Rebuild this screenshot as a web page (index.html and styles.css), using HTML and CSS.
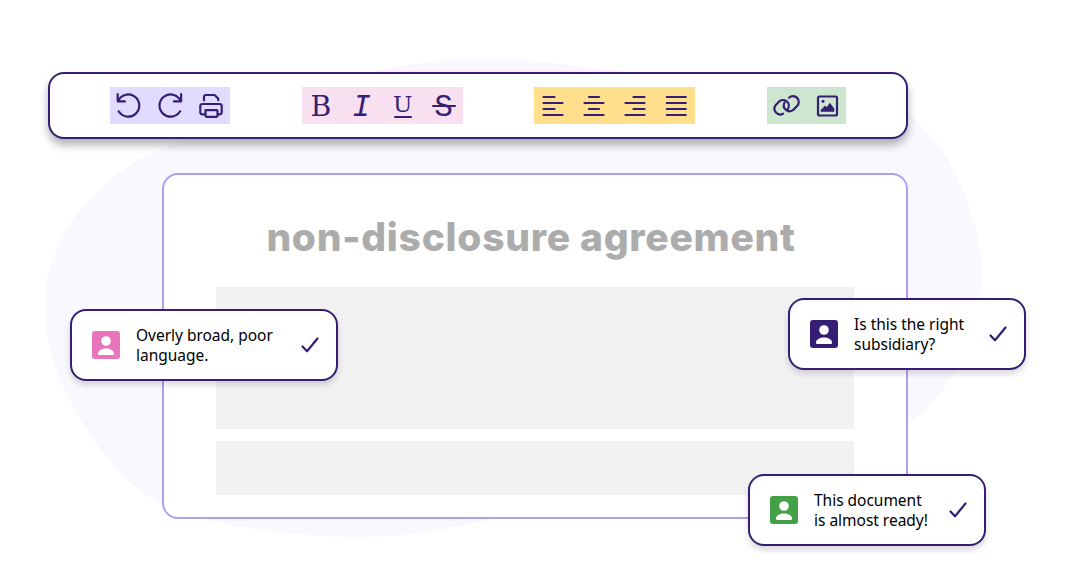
FILE: index.html
```
<!DOCTYPE html>
<html lang="en">
<head>
    <meta charset="UTF-8">
    <meta name="viewport" content="width=device-width, initial-scale=1.0">
    <title>Document Editor</title>
    <link rel="stylesheet" href="styles.css">
</head>
<body>
    <svg class="blob" viewBox="0 0 1070 580">
        <path d="M475 59C535 58 585 68 628 72C740 91 830 70 908 112Q929 132 947 158Q961 181 970 210Q982 243 982 277C982 335 955 388 908 425C820 488 700 476 560 503C490 518 430 537 365 537C290 537 220 528 162 504Q139 493 120 473Q90 440 70 400Q45 355 45 310C45 284 48 271 53 260C65 225 80 209 100 189C120 169 145 155 170 145C270 105 370 59 475 59Z"/>
    </svg>

    <div class="editor">
        <div class="toolbar">
            <div class="tool-group history">
                <svg class="icon" viewBox="0 0 28 28"><path d="M2.7 2v7.4h7.2M2.9 9.4A11.1 11.1 0 1 1 3.7 19.3"/></svg>
                <svg class="icon" viewBox="0 0 28 28"><path d="M25.1 2v7.4h-7.2M24.9 9.4A11.1 11.1 0 1 0 24.1 19.3"/></svg>
                <svg class="icon" viewBox="0 0 28 28"><path d="M7 8.3V5a2 2 0 0 1 2-2h8.5l3.7 3.5v1.8M7.5 22.3H5.3a2 2 0 0 1-2-2v-6.3a2 2 0 0 1 2-2h17.4a2 2 0 0 1 2 2v6.3a2 2 0 0 1-2 2h-2.2M8.5 18.2h11a1 1 0 0 1 1 1v4.6a1 1 0 0 1-1 1h-10a1 1 0 0 1-1-1z"/></svg>
            </div>
            <div class="tool-group format">
                <span class="letter bold">B</span>
                <span class="letter italic">I</span>
                <span class="letter underline">U</span>
                <span class="letter strike">S</span>
            </div>
            <div class="tool-group align">
                <svg class="icon" viewBox="0 0 28 28"><path d="M4.5 5h11M4.5 11h19M4.5 17h11M4.5 23h19"/></svg>
                <svg class="icon" viewBox="0 0 28 28"><path d="M9 5h10M4.5 11h19M9 17h10M4.5 23h19"/></svg>
                <svg class="icon" viewBox="0 0 28 28"><path d="M12.5 5h11M4.5 11h19M12.5 17h11M4.5 23h19"/></svg>
                <svg class="icon" viewBox="0 0 28 28"><path d="M4.8 5h19M4.8 11h19M4.8 17h19M4.8 23h19"/></svg>
            </div>
            <div class="tool-group insert">
                <svg class="icon" viewBox="0 0 28 28">
                    <path d="M11 21.7A5.8 5.8 0 0 1 3.5 13.3L7.5 9.2A5.8 5.8 0 0 1 15.5 17.5"/>
                    <path d="M17 5.7A5.8 5.8 0 0 1 25.1 14L21 18.1A5.8 5.8 0 0 1 12.6 10.5"/>
                </svg>
                <svg class="icon" viewBox="0 0 28 28">
                    <rect x="5" y="4.5" width="19" height="19" rx="1.5"/>
                    <circle class="solid" cx="10" cy="9.3" r="1.5"/>
                    <path class="solid" d="M7.7 19.8v-1.7l4.5-4.5 1.6 1.6 3-4.5 4.4 5.8v3.3z"/>
                </svg>
            </div>
        </div>

        <div class="document">
            <h1>non-disclosure agreement</h1>
            <div class="block block-large"></div>
            <div class="block block-small"></div>
        </div>
    </div>

    <div class="comment comment-pink">
        <svg class="avatar" viewBox="0 0 28 28"><circle cx="14" cy="10" r="4.8"/><path d="M6 22.5c0-3 4-5 8-5s8 2 8 5c0 1-.5 1.5-1.5 1.5h-13c-1 0-1.5-.5-1.5-1.5z"/></svg>
        <p>Overly broad, poor<br>language.</p>
        <svg class="check" viewBox="0 0 20 20"><path d="M2.5 11.5l4.5 4.8L17.5 3.5"/></svg>
    </div>
    <div class="comment comment-purple">
        <svg class="avatar" viewBox="0 0 28 28"><circle cx="14" cy="10" r="4.8"/><path d="M6 22.5c0-3 4-5 8-5s8 2 8 5c0 1-.5 1.5-1.5 1.5h-13c-1 0-1.5-.5-1.5-1.5z"/></svg>
        <p>Is this the right<br>subsidiary?</p>
        <svg class="check" viewBox="0 0 20 20"><path d="M2.5 11.5l4.5 4.8L17.5 3.5"/></svg>
    </div>
    <div class="comment comment-green">
        <svg class="avatar" viewBox="0 0 28 28"><circle cx="14" cy="10" r="4.8"/><path d="M6 22.5c0-3 4-5 8-5s8 2 8 5c0 1-.5 1.5-1.5 1.5h-13c-1 0-1.5-.5-1.5-1.5z"/></svg>
        <p>This document<br>is almost ready!</p>
        <svg class="check" viewBox="0 0 20 20"><path d="M2.5 11.5l4.5 4.8L17.5 3.5"/></svg>
    </div>
</body>
</html>
```
FILE: styles.css
```
* {
    margin: 0;
    padding: 0;
    box-sizing: border-box;
}

body {
    position: relative;
    width: 1070px;
    height: 580px;
    overflow: hidden;
    background-color: #fff;
    font-family: 'Noto Sans', sans-serif;
}

.blob {
    position: absolute;
    top: 0;
    left: 0;
    width: 1070px;
    height: 580px;
    fill: #f9f8ff;
}

.editor {
    position: relative;
    width: 860px;
    margin-left: 48px;
    padding-top: 72px;
}

/* Toolbar */
.toolbar {
    display: flex;
    justify-content: space-between;
    align-items: center;
    height: 67px;
    padding: 0 60px;
    background-color: #fff;
    border: 2px solid #341f74;
    border-radius: 16px;
    box-shadow: 0 6px 8px rgba(0, 0, 0, 0.3);
}

.tool-group {
    display: flex;
    align-items: center;
    gap: 13px;
    height: 37px;
    padding: 0 5px;
}

.history {
    background-color: #e1dcff;
}

.format {
    background-color: #f8e0f0;
}

.align {
    background-color: #ffdf8b;
}

.insert {
    background-color: #cee6cf;
}

.icon {
    width: 28px;
    height: 28px;
    fill: none;
    stroke: #341f74;
    stroke-width: 2.2;
    stroke-linecap: round;
    stroke-linejoin: round;
}

.icon .solid {
    fill: #341f74;
    stroke: none;
}

.letter {
    position: relative;
    width: 28px;
    height: 28px;
    color: #341f74;
    font-family: 'DejaVu Serif', serif;
    font-size: 28px;
    line-height: 28px;
    text-align: center;
}

.bold {
    font-stretch: condensed;
    line-height: 29px;
    transform: scaleX(1.12);
}

.italic {
    font-family: 'Liberation Mono', monospace;
    font-size: 31px;
    font-style: italic;
    line-height: 31px;
}

.underline {
    font-size: 23px;
    line-height: 24px;
}

.strike {
    font-family: 'Liberation Mono', monospace;
    font-size: 31px;
    line-height: 31px;
}

.underline::after,
.strike::after {
    content: '';
    position: absolute;
    left: 5px;
    bottom: 2px;
    width: 18px;
    height: 2px;
    border-radius: 1px;
    background-color: #341f74;
}

.strike::after {
    left: 2px;
    bottom: 13px;
    width: 24px;
}

/* Document */
.document {
    width: 746px;
    height: 346px;
    margin: 34px 0 0 114px;
    padding: 36px 52px 0;
    background-color: #fff;
    border: 2px solid #ada0f3;
    border-radius: 16px;
}

h1 {
    height: 76px;
    padding-right: 8px;
    color: #acacac;
    font-family: Inter, sans-serif;
    font-size: 39px;
    font-weight: 800;
    line-height: 52px;
    letter-spacing: 0.7px;
    text-align: center;
    white-space: nowrap;
}

.block {
    background-color: #f2f2f2;
}

.block-large {
    height: 142px;
    margin-bottom: 12px;
}

.block-small {
    height: 54px;
}

/* Comments */
.comment {
    position: absolute;
    display: flex;
    align-items: center;
    width: 238px;
    height: 72px;
    padding: 0 16px 0 20px;
    background-color: #fff;
    border: 2px solid #341f74;
    border-radius: 16px;
    box-shadow: 0 4px 6px rgba(0, 0, 0, 0.15);
}

.comment p {
    flex: 1;
    margin-left: 16px;
    color: #000;
    font-size: 15.5px;
    line-height: 20px;
    letter-spacing: -0.02px;
    white-space: nowrap;
}

.avatar {
    width: 28px;
    height: 28px;
    border-radius: 3px;
    fill: #fff;
}

.check {
    width: 20px;
    height: 20px;
    fill: none;
    stroke: #341f74;
    stroke-width: 2.2;
    stroke-linecap: round;
    stroke-linejoin: round;
}

.comment-pink {
    top: 309px;
    left: 70px;
    width: 268px;
}

.comment-pink .avatar {
    background-color: #e874bb;
}

.comment-purple {
    top: 298px;
    left: 788px;
}

.comment-purple .avatar {
    background-color: #341f74;
}

.comment-green {
    top: 474px;
    left: 748px;
}

.comment-green .avatar {
    background-color: #43a047;
}
```
